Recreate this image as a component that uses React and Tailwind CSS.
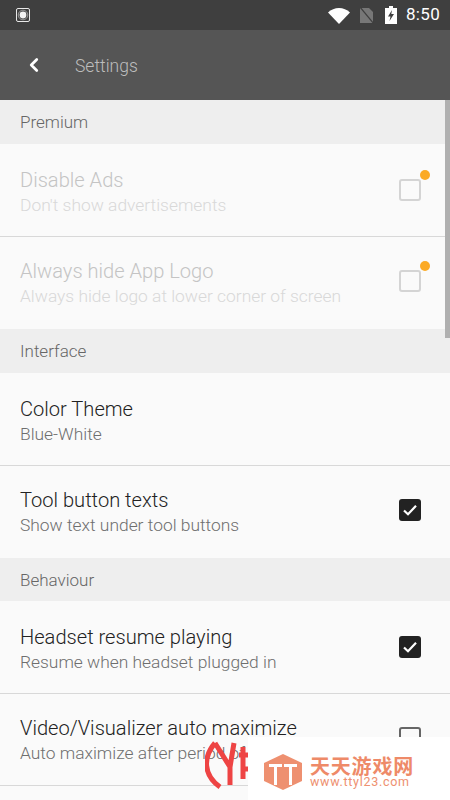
import { ChevronLeft } from 'lucide-react';

const font = { fontFamily: 'Roboto, sans-serif' };

function Box({ checked, disabled, badge }) {
  return (
    <div className="relative w-[22px] h-[22px] shrink-0">
      {checked ? (
        <div className="w-[22px] h-[22px] rounded-[3px] bg-[#222222] flex items-center justify-center">
          <svg width="16" height="16" viewBox="0 0 16 16" fill="none">
            <path d="M2 8.500l4 3.800L14 3.800" stroke="#fff" strokeWidth="2.200" />
          </svg>
        </div>
      ) : (
        <div className={`w-[22px] h-[22px] rounded-[3px] border-2 ${disabled ? 'border-[#d4d4d4]' : 'border-[#666666]'}`} />
      )}
      {badge && <div className="absolute -top-[9px] -right-[9px] w-[10px] h-[10px] rounded-full bg-[#fbaa25]" />}
    </div>
  );
}

function Section({ title, short }) {
  return (
    <div className={`bg-[#eeeeee] flex items-center pl-5 pt-[2px] text-[17px] font-light text-[#666666] ${short ? 'h-[43px]' : 'h-[44px]'}`}>
      {title}
    </div>
  );
}

function Row({ title, sub, checked, box, disabled, badge, className }) {
  return (
    <div className={`bg-[#fafafa] flex items-center pl-5 pr-[29px] ${className}`}>
      <div className="flex-1 min-w-0 mt-[3px]">
        <div className={`text-[20.100px] font-light leading-[26px] whitespace-nowrap ${disabled ? 'text-[#c4c4c4]' : 'text-[#222222]'}`}>{title}</div>
        <div className={`text-[17.400px] font-light leading-[24px] whitespace-nowrap ${disabled ? 'text-[#d8d8d8]' : 'text-[#6e6e6e]'}`}>{sub}</div>
      </div>
      {box && <Box checked={checked} disabled={disabled} badge={badge} />}
    </div>
  );
}

export default function App() {
  return (
    <div className="relative w-[450px] h-[800px] overflow-hidden bg-[#fafafa]" style={font}>
      {/* status bar */}
      <div className="h-[30px] bg-[#3f3f3f] flex items-center pl-4 pr-[10px]">
        <svg width="14" height="14" viewBox="0 0 14 14">
          <rect x="0.500" y="0.500" width="13" height="13" rx="1.500" fill="none" stroke="#e8e8e8" />
          <circle cx="7" cy="7" r="4.800" fill="none" stroke="#9a9a9a" />
          <circle cx="7" cy="7" r="3.400" fill="#f2f2f2" />
        </svg>
        <div className="flex-1" />
        <svg width="22" height="17" viewBox="0 0 22 17" className="mr-[9px]">
          <path d="M0 5.500C3 2.500 7 1 11 1s8 1.500 11 4.500L11 17z" fill="#fff" />
        </svg>
        <svg width="15" height="17" viewBox="0 0 15 17" className="mr-[11px]">
          <path d="M1 1h9l4 4v11H1z" fill="#777777" />
          <path d="M1 0l14 17" stroke="#3f3f3f" strokeWidth="1.200" />
        </svg>
        <svg width="12" height="18" viewBox="0 0 12 18" className="mr-[9px]">
          <path d="M4 0h4v2h4v16H0V2h4z" fill="#fff" />
          <path d="M7 4L3 10.500h2.500L4.500 15 9 8H6.300z" fill="#3f3f3f" />
        </svg>
        <span className="text-[17px] text-white tracking-[0.3px]">8:50</span>
      </div>

      {/* toolbar */}
      <div className="h-[70px] bg-[#555555] flex items-center">
        <ChevronLeft className="ml-[23px] w-[22px] h-[22px] text-white" strokeWidth={3} />
        <span className="ml-[30px] pt-[2px] text-[17.500px] font-light text-[#bdbdbd]">Settings</span>
      </div>

      <Section title="Premium" />
      <Row title="Disable Ads" sub="Don't show advertisements" box disabled badge className="h-[93px] border-b border-[#d8d8d8]" />
      <Row title="Always hide App Logo" sub="Always hide logo at lower corner of screen" box disabled badge className="h-[92px] pb-[4px]" />
      <Section title="Interface" />
      <Row title="Color Theme" sub="Blue-White" className="h-[93px] border-b border-[#d8d8d8]" />
      <Row title="Tool button texts" sub="Show text under tool buttons" box checked className="h-[92px] pb-[4px]" />
      <Section title="Behaviour" short />
      <Row title="Headset resume playing" sub="Resume when headset plugged in" box checked className="h-[93px] border-b border-[#d8d8d8]" />
      <Row title="Video/Visualizer auto maximize" sub="Auto maximize after period of inactivity" box className="h-[92px] pb-[3px] border-b border-[#d8d8d8]" />

      {/* scrollbar */}
      <div className="absolute right-0 top-[100px] w-[5px] h-[238px] bg-[#b0b0b0]" />

      {/* watermark */}
      <div className="absolute left-[248px] top-[737px] w-[202px] h-[63px] bg-white flex items-center">
        <svg width="40" height="36" viewBox="0 0 40 36" className="ml-[15px] mt-[6px]">
          <path d="M20 0L39 9v18L20 36 1 27V9z" fill="#ee9070" />
          <path d="M6 10h13v3h-5v18h-3V13H6zM21 10h13v3h-5v18h-3V13h-5z" fill="#fff" />
        </svg>
        <div className="ml-[7px] mt-[9px] flex flex-col">
          <span className="text-[20px] leading-[18px] font-bold text-[#ee8a68] tracking-[0.8px] whitespace-nowrap" style={{ fontFamily: '"Noto Sans CJK SC", sans-serif' }}>天天游戏网</span>
          <span className="text-[12.500px] leading-[14px] text-[#ee9070] tracking-[0.7px] whitespace-nowrap">www.ttyl23.com</span>
        </div>
      </div>
      <svg width="43" height="52" viewBox="0 0 43 52" className="absolute left-[205px] top-[741px]">
        <path d="M10 2C-2 16 -2 34 15 46" fill="none" stroke="#ee4444" strokeWidth="5" />
        <path d="M10 2l15 24M29 2l-4 24v18M34 14h9M36 28h7M38 6v32" fill="none" stroke="#ee4444" strokeWidth="5" />
      </svg>
    </div>
  );
}
